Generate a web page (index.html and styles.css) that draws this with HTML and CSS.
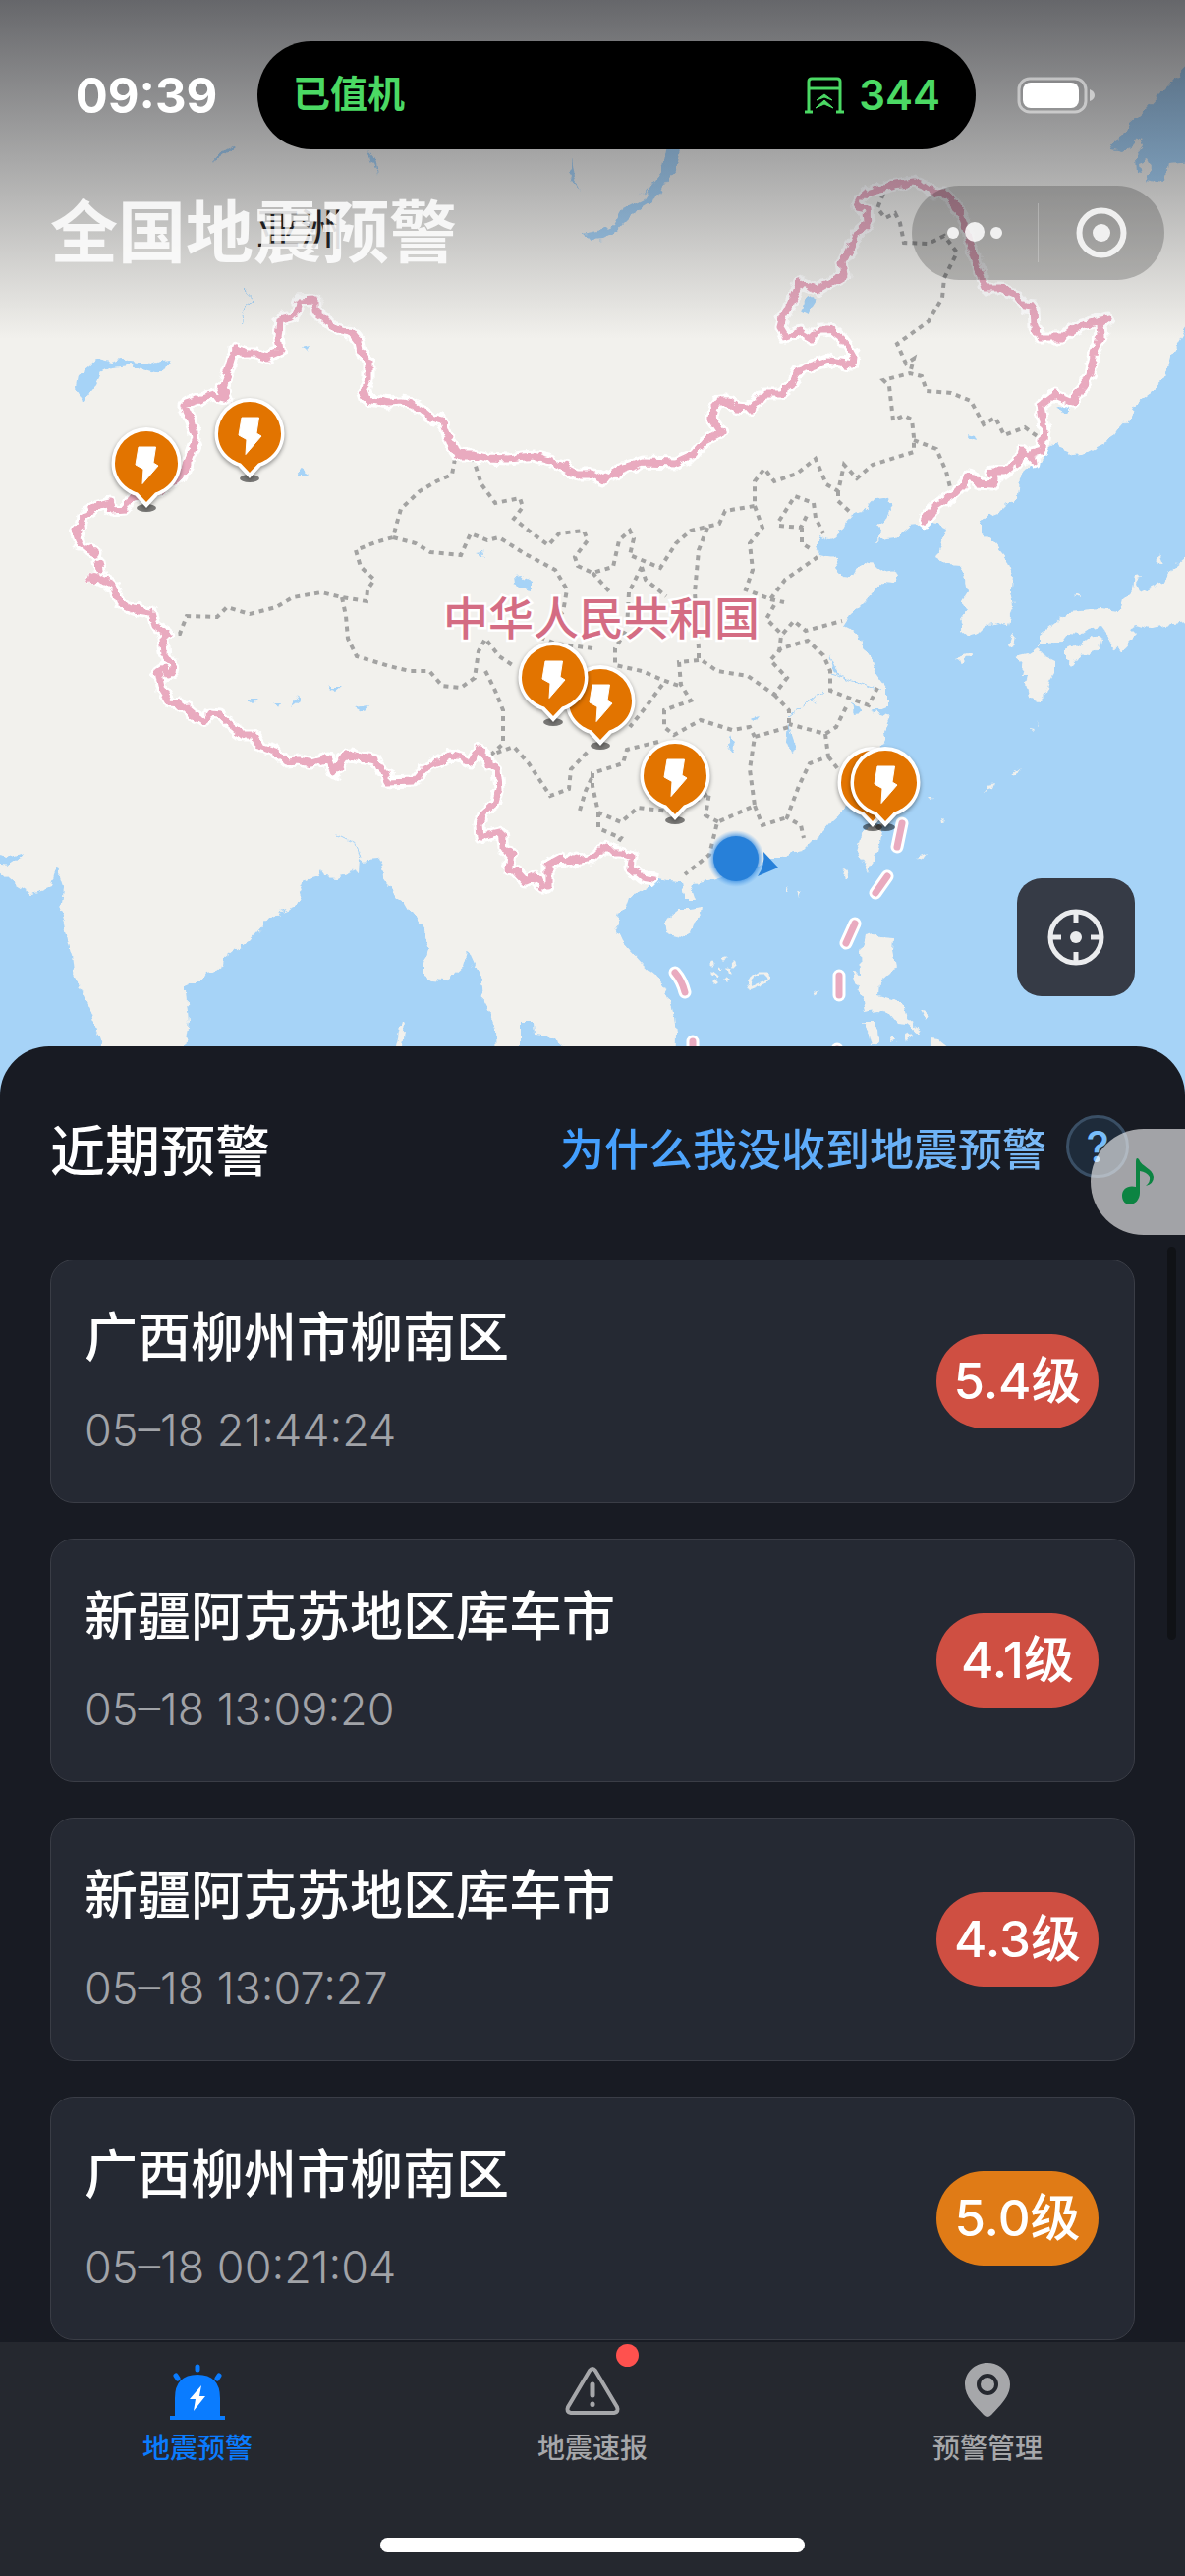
FILE: index.html
```html
<!DOCTYPE html>
<html lang="zh-CN">
<head>
    <meta charset="UTF-8">
    <meta name="viewport" content="width=device-width, initial-scale=1.0">
    <title>全国地震预警</title>
    <link rel="stylesheet" href="styles.css">
</head>
<body>
    <div class="app">
        <header class="top">
            <svg class="map" viewBox="0 0 1206 1120" preserveAspectRatio="xMidYMin slice" role="img" aria-label="地图">
                <defs>
                    <symbol id="pin" viewBox="0 0 90 110" width="90" height="110">
                        <ellipse cx="45" cy="90" rx="10" ry="4" fill="#000" opacity=".5"/>
                        <path class="pin-body" d="M45 8a35.500 36 0 0 1 35.500 36.500c0 17-12 29-24 33L45 90 33.500 77.500c-12-4-24-16-24-33A35.500 36 0 0 1 45 8z" fill="#fff"/>
                        <path d="M45 12a32 32.500 0 0 1 32 32.500c0 16-11 26-23 30L45 84l-9-9.500c-12-4-23-14-23-30A32 32.500 0 0 1 45 12z" fill="#e27400"/>
                        <path d="M37 28h17.500l-2.500 16 5 3-16 18.500 1-15-8-4.500z" fill="#fff" stroke="#fff" stroke-width="1" stroke-linejoin="round"/>
                    </symbol>
                    <radialGradient id="glow">
                        <stop offset=".7" stop-color="#2780d9"/>
                        <stop offset="1" stop-color="#5aa6f0" stop-opacity="0"/>
                    </radialGradient>
                    <!-- 海岸线、国界的细小曲折 -->
                    <filter id="rough" filterUnits="userSpaceOnUse" x="0" y="0" width="1206" height="1120">
                        <feTurbulence type="fractalNoise" baseFrequency=".11" numOctaves="2" seed="4"/>
                        <feDisplacementMap in="SourceGraphic" scale="9" xChannelSelector="R" yChannelSelector="G"/>
                    </filter>
                    <!-- 国界 -->
                    <path id="border" d="M941 531L945 523 953 515 972 502 980 494 984 485 990 486 995 492 1011 493 1013 487 1009 480 1022 480 1036 470 1040 458 1052 471 1050 461 1061 458 1063 437 1059 413 1073 402 1092 410 1099 397 1105 389 1109 380 1114 357 1121 343 1120 330 1128 324 1113 328 1095 333 1082 343 1059 343 1053 333 1052 313 1043 312 1034 300 1018 293 1003 293 995 272 990 255 982 230 977 217 972 208 961 196 951 197 940 189 930 185 911 188 884 195 875 203 871 211 882 213 883 228 872 238 864 256 857 267 859 280 847 287 833 295 823 291 814 287 803 313 797 322 794 333 800 343 815 338 825 344 834 335 845 335 857 345 864 354 869 363 868 371 843 367 826 373 811 378 805 392 795 400 778 400 770 410 763 416 749 415 741 408 732 408 726 415 724 425 734 440 718 448 705 463 688 471 655 470 632 478 614 489 603 483 588 483 575 476 560 469 542 464 517 467 496 466 481 463 467 463 458 450 450 428 438 425 429 417 419 411 408 409 396 410 373 406 370 397 375 385 375 370 367 357 365 348 358 339 349 337 340 334 328 322 321 317V305L304 306 302 317 296 323 285 326 283 343 285 357 272 363 261 360 250 360 240 354 233 377 226 395 232 406 217 402 187 412 194 427 199 447 192 467 188 482 181 487 160 500 133 507 127 518 114 519 112 512 100 515 85 525 83 533 77 540 82 555M88 558l10 5M100 572l2 9M95 588L110 593 117 600 121 613 135 620 154 623 158 637 170 645 165 650 167 665 176 678 175 685 171 687 166 680 161 684 165 702 173 715 183 716 196 727 208 735 213 726 223 727 235 738 248 748 258 748 265 760 280 765 292 775 304 774 317 777 335 772 340 787 348 773 356 768 383 774 386 781 392 787 394 796 421 795 431 783 445 776 458 768 468 771 479 777 488 763 496 772 498 779 506 783 508 803 504 817 492 828 488 840 489 852 510 847 512 863 520 868 517 885 524 885 535 897 546 892 551 903 558 903 558 880 571 873 577 878 585 873 591 876 603 873 611 865 618 862 624 868 632 868 643 872 641 883 653 893 666 895"/>
                    <path id="dashes" d="M918 838l-5 24M903 892l-12 17M870 940l-9 20M854 993v20M687 990q7 8 10 20M705 1060v20M852 1068v20"/>
                </defs>
                <rect width="1206" height="1120" fill="#f2f1ed"/>

                <!-- 海洋 -->
                <g class="sea" filter="url(#rough)">
                    <path d="M1216 320L1198 350 1191 363 1187 378 1184 387 1170 400 1157 410 1150 424 1138 437 1132 446 1126 450 1107 460 1100 463 1091 464 1088 459 1080 456 1077 450 1070 454 1066 462 1058 470 1044 478 1038 487 1037 497 1036 505 1026 512 1018 520 1005 525 999 532 999 543 1008 548 1015 557 1024 568 1030 583 1029 600 1032 617 1028 626 1026 637 1015 634 1003 637 996 644 984 647 979 643 980 636 977 630 984 620 979 612 984 604 982 590 976 575 964 574 953 567 956 560 959 548 963 537 955 533 945 532 936 534 926 535 911 547 902 548 891 552 899 543 893 535 903 528 907 520 905 508 898 506 891 507 885 514 878 522 868 524 861 532 857 540 849 547 842 549 834 545 830 550 830 557 834 565 843 567 851 568 853 575 851 580 857 587 866 588 872 578 880 573 890 575 899 581 906 580 914 585 911 593 900 592 888 603 880 612 872 620 864 626 857 637 865 641 874 647 878 657 886 670 890 682 903 700 903 712 903 718 888 724 896 727 906 730 903 737 900 745 902 753 895 767 889 778 880 790 873 806 866 814 861 823 848 835 838 847 826 856 815 867 805 869 795 873 784 873 771 883 757 893 745 891 734 893 720 897 707 900 704 908 707 917 697 917 695 907 693 897 680 896 668 893 659 902 641 913 638 922 630 930 626 943 633 958 641 967 655 982 668 993 676 1004 682 1017 686 1035 688 1053 686 1130H1216z"/>
                    <path d="M184 1130L188 1065 192 1040 190 1020 189 1007 193 1000 204 1000 210 990 220 988 227 983 228 976 240 966 254 957 262 948 275 933 287 928 300 923 306 910 304 903 306 898 316 894 323 892 328 884 331 892 342 893 354 890 358 884 365 888 366 875 370 878 374 874 385 873 389 882 390 893 398 904 404 913 412 918 419 930 425 938 431 947 433 957 436 967 431 982 431 993 440 998 450 999 462 991 471 983 475 970 478 972 483 983 488 990 491 1004 492 1020 499 1033 504 1047 506 1130z"/>
                    <path d="M-10 878L15 900 31 910 42 907 52 903 55 890 58 883 62 884 61 893 65 905 62 927 66 940 69 957 73 972 75 990 84 1010 92 1027 98 1048 104 1065V1130H-10z"/>
                    <path d="M-8 868l20 4 12-4-5 7-9 6-18-2zM529 1040h15l1 13 15 2 12 9 3 20h-46z"/>
                    <path d="M1216 60L1194 83 1180 97 1166 112 1149 127 1142 138 1130 147 1132 153 1141 155 1152 148 1160 139 1163 150 1156 160 1157 177 1163 178 1161 166 1168 163 1172 171 1166 183 1176 185 1186 186 1189 167 1216 165z"/>
                    <path d="M686 130L678 152 674 173 664 186 655 197 647 201 660 194 654 203 634 213 625 229 614 234 603 236 592 238 603 244 614 243 626 237 633 229 645 217 668 203 676 187 688 173 693 152 698 130z"/>
                    <path d="M85 408l-8-13 2-12 12-10 9-8 12 3 11-3 9 4 22 2 10-4 10-1-4 9-11 4-27-7-17 2-13 7-5 11z"/>
                    <path d="M240 149l-16 12-9 5 13-14 9-5zM375 153l7 8 3 17-4-10zM582 160l3 22 6 12-8-10-5-8 4-4z"/>
                    <path d="M820 304l6-2 5 3-5 8-4 8-6-3zM522 587l8-1 12 6 0 9-9-2-10-4zM1075 416l8-4 6 4-5 5zM308 353l8-2-3 7zM303 484l5-6 6 4-2 2zM334 699l13 0-5 4zM362 720l12-2-5 6zM254 712l8 0-4 3zM278 716l9 0-2 4zM296 719l6-12 2 6zM484 563l6-1 2 4z"/>
                    <path d="M744 746l5 12-4 8-5-7zM802 738l6 18 3 6-7 4-4-10zM867 717l8 3 3 6-9 1zM844 666l6 12 6 12-8-8zM824 713l6-2-2 4zM762 731l12-3-4 5zM984 442l8 2 2 5-6-2z"/>
                    <path class="river" d="M247 294l12 11-10 8-3 10 3 4M845 686l26 8 26 9M343 850l20 10 4 14M803 730l20-15 16-12"/>
                </g>

                <!-- 岛屿 -->
                <g class="land" filter="url(#rough)">
                    <path d="M1216 560L1191 580 1184 592 1168 600 1160 604 1157 592 1162 584 1156 585 1154 598 1145 607 1141 622 1120 620 1088 623 1074 634 1057 647 1057 656 1066 655 1080 653 1086 645 1099 646 1108 640 1120 637 1128 648 1134 660 1140 664 1148 655 1157 646 1150 639 1157 636 1170 640 1186 636 1216 632z"/>
                    <path d="M1084 660l10-5 5 2 12-10 9 3-2 10-9 6-7-1-11 13-7-8z"/>
                    <path d="M1034 668l12-3 11-7 5 9 12 6 0 12-5 8-4 12-8 8-10-5-3-12 2-10-6 0 2-8z"/>
                    <path d="M676 940l6-8 9-7 10 0 15-2-1 8-9 10-3 8-10 6-8-2-7-3z"/>
                    <path d="M878 847l8-8h13l-2 12-4 16-5 9-4 11-4-8-8-12z"/>
                    <path d="M880 951l8-2 9 5 12 1-1 12 3 15-6 10-10 8-1 13 14 4 13 8 4 14 12 9-2 4-12-10-10-1-8-10-12-2-13 2-2-13-7-14-4-14 10 1-1-22z"/>
                    <path d="M878 1040l10 0 7 8 1 14-8 2-3-12zM945 1057l10 1 12 10-18 4zM408 1040l4 1-3 24h-6zM921 1054l8-2-6 9zM905 1055l8 4-6 3zM936 1028l8 4-2 8z"/>
                    <path d="M973 670l12-4 4 2-10 6zM1027 656l4-12 1 0-3 14zM1046 741l5 1-2 2zM1056 739l2-6-2 8zM1027 790l11-9-6 8zM1003 806l8-10-2 8zM861 884l3 2-2 8-3-3zM933 873l10-4-5 6zM800 902l3 6-3-2zM812 907l4 3-2 5zM830 1008l4 2-2 3zM958 832l4 4-3 1zM944 813l5 0-3 2zM1180 564l3 8-5 4zM1095 606l3-2 1 4z"/>
                    <path class="reef" d="M725 990l4 3M732 984l2 2M736 978l3-1M742 986l1 4M724 982l2-2M746 980l1 3M738 996l2 1M729 998l-2 1M762 1002l4-7 6-4 9 0 1 4-6 6-7 3-5 2z"/>
                </g>

                <!-- 省界 -->
                <g class="province">
                    <path d="M463 467L460 483 444 490 427 500 408 518 404 532 400 547 382 552 362 560 367 577 381 590 374 600 373 612 348 608 327 603 298 608 281 618 254 625 231 618 221 628 190 627 183 645 171 646"/>
                    <path d="M348 608L352 627 354 650 363 668 396 678 417 683 437 683 450 698 469 700 483 690 487 663 494 650 508 668 523 678"/>
                    <path d="M400 547L423 553 438 562 469 565 479 543 496 550 508 547 533 563 565 580 577 600 573 623 546 647 565 655 603 660"/>
                    <path d="M481 465L490 493 504 512 529 507 532 516 523 528 538 540 558 555 569 543 594 540 598 550 585 567 588 576 603 583 624 577 630 550 641 540 645 548 641 565 672 578 688 553 703 540 732 533 738 520 768 515 768 490 778 477 788 490 811 482 830 467 841 493 853 500 859 473 872 487 888 473 930 460 930 445 928 427 920 423 909 428 905 393 899 387 926 380 938 383 943 398 968 400 988 408 1001 432 1013 425 1022 443 1043 435 1061 448"/>
                    <path d="M899 197L893 212 901 222 911 217 916 227 920 247 945 248 961 240 974 257 961 283 959 303 945 327 913 350 922 370 930 365 926 380"/>
                    <path d="M930 448L953 457 963 480 968 500M853 500v10l13 12M793 530L809 505 828 512 830 527 838 543M793 535L815 537 822 523M816 537v16l8 5"/>
                    <path d="M768 515L776 537 763 553 766 580 759 600 784 610 799 590 832 567M784 610l14 3M788 616L780 630 797 647M793 664l2-17 13-15 12 10 37-10"/>
                    <path d="M720 537L711 560 707 603 711 660 711 670 730 683 761 688 788 707 801 690 784 672 795 660 822 652 838 667 845 683 845 703 884 718 893 700"/>
                    <path d="M788 707L803 723 803 740 768 750 763 783 768 820 730 837 722 870 697 890M768 820L776 840 801 832"/>
                    <path d="M711 672L691 674 693 697 703 713 676 723 676 740 686 748 713 733 745 743 763 740 768 750"/>
                    <path d="M640 603L638 640 626 660 626 677 653 683 674 692 691 698M674 697L657 720 641 740M653 577L640 603M653 577l4 13 21 17M603 583l17 19"/>
                    <path d="M670 755L638 763 634 777 603 787 603 800 609 827 632 837 649 822 688 827 722 807 718 830 732 837M609 827v16l23 10-6 9"/>
                    <path d="M861 720L851 740 840 747 803 737M840 747L843 770 824 777 813 800 801 832 815 840 818 853M843 770l10 13"/>
                    <path d="M494 683L504 703 512 723 512 757 500 768 523 760 538 777 560 810 579 803 581 783 600 763M590 825l6-20 7-15"/>
                </g>

                <g filter="url(#rough)">
                    <use href="#border" class="border-halo"/>
                    <use href="#border" class="border-line"/>
                    <circle cx="95" cy="588" r="6" fill="#e9aabf"/>
                </g>
                <use href="#dashes" class="border-halo"/>
                <use href="#dashes" class="border-line"/>

                <text class="asia" x="261" y="250">亚洲</text>
                <text class="country" x="451" y="646">中华人民共和国</text>

                <!-- 当前位置 -->
                <circle cx="749" cy="874" r="29" fill="url(#glow)"/>
                <circle cx="749" cy="874" r="23" fill="#2780d9"/>
                <path d="M777 867l15 16-21 9q8-11 6-25z" fill="#2780d9"/>

                <use href="#pin" x="104" y="427"/>
                <use href="#pin" x="209" y="397"/>
                <use href="#pin" x="566" y="669"/>
                <use href="#pin" x="518" y="645"/>
                <use href="#pin" x="642" y="745"/>
                <use href="#pin" x="843" y="752"/>
                <use href="#pin" x="856" y="752"/>
            </svg>

            <div class="overlay">
                <div class="status">
                    <span class="time">09:39</span>
                    <div class="island">
                        <span class="checkin">已值机</span>
                        <span class="gate">
                            <svg width="42" height="38" viewBox="0 0 42 38" fill="none" stroke="#4bd964" stroke-width="3">
                                <path d="M5 36V5q0-3 3-3h26q3 0 3 3v31M5 12h32M1 36h8M33 36h8"/>
                                <path d="M13 24l8-6 8 6-8-3zM12 32l9-8 9 8-9-4z" fill="#4bd964" stroke-width="1"/>
                            </svg>
                            344
                        </span>
                    </div>
                    <svg class="battery" width="80" height="38" viewBox="0 0 80 38">
                        <rect x="2" y="2" width="68" height="34" rx="11" fill="none" stroke="#fff" stroke-opacity=".5" stroke-width="3"/>
                        <rect x="6" y="6" width="57" height="26" rx="8" fill="#fff"/>
                        <path d="M74 13q5 2 5 6t-5 6z" fill="#fff" opacity=".55"/>
                    </svg>
                </div>
                <div class="titlebar">
                    <h1>全国地震预警</h1>
                    <div class="capsule">
                        <button type="button" aria-label="更多">
                            <svg width="60" height="60" viewBox="0 0 60 60" fill="#fff">
                                <circle cx="8" cy="30" r="6"/><circle cx="30" cy="29" r="10"/><circle cx="52" cy="30" r="6"/>
                            </svg>
                        </button>
                        <span class="line"></span>
                        <button type="button" aria-label="关闭">
                            <svg width="60" height="60" viewBox="0 0 60 60">
                                <circle cx="30" cy="30" r="22.500" fill="none" stroke="#fff" stroke-width="6"/><circle cx="30" cy="30" r="9" fill="#fff"/>
                            </svg>
                        </button>
                    </div>
                </div>
            </div>

            <button type="button" class="locate" aria-label="定位">
                <svg width="60" height="60" viewBox="0 0 60 60" fill="none" stroke="#ebecee" stroke-width="5">
                    <circle cx="30" cy="30" r="26"/>
                    <path d="M30 4v11M30 45v11M4 30h11M45 30h11"/>
                    <circle cx="30" cy="30" r="6" fill="#ebecee" stroke="none"/>
                </svg>
            </button>
        </header>

        <main class="sheet">
            <div class="sheet-head">
                <h2>近期预警</h2>
                <a href="#" class="why"><span class="why-text">为什么我没收到地震预警</span><span class="mark">?</span></a>
            </div>
            <ul class="list">
                <li class="card">
                    <div class="info">
                        <h3>广西柳州市柳南区</h3>
                        <time>05–18 21:44:24</time>
                    </div>
                    <span class="level">5.4级</span>
                </li>
                <li class="card">
                    <div class="info">
                        <h3>新疆阿克苏地区库车市</h3>
                        <time>05–18 13:09:20</time>
                    </div>
                    <span class="level">4.1级</span>
                </li>
                <li class="card">
                    <div class="info">
                        <h3>新疆阿克苏地区库车市</h3>
                        <time>05–18 13:07:27</time>
                    </div>
                    <span class="level">4.3级</span>
                </li>
                <li class="card">
                    <div class="info">
                        <h3>广西柳州市柳南区</h3>
                        <time>05–18 00:21:04</time>
                    </div>
                    <span class="level level_orange">5.0级</span>
                </li>
            </ul>
            <button type="button" class="music" aria-label="音乐">
                <svg width="36" height="52" viewBox="0 0 36 52" fill="#0c8442">
                    <path d="M16 6q0-6 3-3c3 8 14 9 15 18q0 7-8 9 5-4 4-9-3-5-10-6v22c0 7-5 12-10 12-5 0-8-4-8-9 0-7 6-11 14-9z"/>
                </svg>
            </button>
            <span class="scrollbar"></span>
        </main>

        <nav class="tabs">
            <a href="#" class="tab active">
                <svg width="60" height="60" viewBox="0 0 60 60">
                    <path d="M2 56h5V38q0-24 23-24t23 24v18h5v4H2z" fill="#0a7cff"/>
                    <path d="M30 6v3M8 15l2 3M52 15l-2 3" stroke="#0a7cff" stroke-width="5" stroke-linecap="round"/>
                    <path d="M34 25L22 39h6l-2 12 12-15h-6z" fill="#fff"/>
                </svg>
                地震预警
            </a>
            <a href="#" class="tab">
                <svg width="60" height="60" viewBox="0 0 60 60" fill="none" stroke="#a6a7aa" stroke-width="4" stroke-linejoin="round" stroke-linecap="round">
                    <path d="M27 10q3-4 6 0l22 37q2 5-3 6H8q-5-1-3-6z"/>
                    <path d="M30 24v11" stroke-width="5"/><path d="M30 44v.5" stroke-width="5"/>
                </svg>
                <i class="dot"></i>
                地震速报
            </a>
            <a href="#" class="tab">
                <svg width="60" height="60" viewBox="0 0 60 60">
                    <path d="M30 2c13 0 23 10 23 22 0 13-11 22-19 31q-4 4-8 0C18 46 7 37 7 24 7 12 17 2 30 2z" fill="#a6a7aa"/>
                    <circle cx="30" cy="24" r="9" fill="none" stroke="#25282f" stroke-width="4"/>
                </svg>
                预警管理
            </a>
            <span class="home"></span>
        </nav>
    </div>
</body>
</html>
```
FILE: styles.css
```css
* {
    box-sizing: border-box;
}
html, body {
    height: 100%;
    margin: 0;
}
body {
    background-color: #181b23;
    color: #fff;
    font-family: Inter, "Noto Sans CJK SC", sans-serif;
}
h1, h2, h3, ul {
    margin: 0;
    padding: 0;
}
button {
    border: 0;
    padding: 0;
    background: none;
}
a {
    text-decoration: none;
}
svg {
    display: block;
}
.app {
    display: flex;
    flex-direction: column;
    height: 100vh;
    overflow: hidden;
}

/* 地图 */
.top {
    position: relative;
    flex: none;
    height: 1120px;
}
.map {
    width: 100%;
    height: 100%;
}
.sea {
    fill: #a6d3f7;
}
.land {
    fill: #f2f1ed;
}
.reef {
    fill: none;
    stroke: #f2f1ed;
    stroke-width: 3;
    stroke-linecap: round;
}
.river {
    fill: none;
    stroke: #a6d3f7;
    stroke-width: 1;
}
.province {
    fill: none;
    stroke: #a3a3a2;
    stroke-width: 4;
    stroke-dasharray: 5 5;
}
.border-halo, .border-line {
    fill: none;
    stroke-linecap: round;
    stroke-linejoin: round;
}
.border-halo {
    stroke: #fff;
    stroke-width: 13;
}
.border-line {
    stroke: #e9aabf;
    stroke-width: 7;
}
.asia {
    fill: #222;
    font-size: 44px;
}
.country {
    fill: #d46c83;
    stroke: #fff;
    stroke-width: 5;
    paint-order: stroke;
    font-size: 46px;
    font-weight: 500;
}
.pin-body {
    filter: drop-shadow(0 2px 2px rgba(0, 0, 0, .4));
}
.overlay {
    position: absolute;
    top: 0;
    left: 0;
    right: 0;
    height: 345px;
    padding-top: 42px;
    background: linear-gradient(rgba(20, 22, 30, .63), rgba(20, 22, 30, 0));
}
.status {
    display: grid;
    grid-template-columns: 262px 1fr 213px;
    align-items: center;
    height: 110px;
}
.time {
    padding-left: 36px;
    text-align: center;
    font-size: 49px;
    font-weight: 700;
}
.island {
    display: flex;
    align-items: center;
    justify-content: space-between;
    height: 110px;
    padding: 0 36px;
    border-radius: 55px;
    background-color: #000;
    color: #4bd964;
    font-size: 38px;
    line-height: 54px;
    font-weight: 600;
}
.checkin {
    padding-bottom: 4px;
}
.gate {
    display: flex;
    align-items: center;
    gap: 14px;
    font-size: 42px;
}
.battery {
    margin-left: 42px;
}
.titlebar {
    display: flex;
    align-items: center;
    justify-content: space-between;
    margin-top: 35px;
    padding: 0 21px 0 51px;
}
.titlebar h1 {
    color: rgba(255, 255, 255, .85);
    font-size: 69px;
    line-height: 100px;
    font-weight: 700;
}
.capsule {
    display: flex;
    align-items: center;
    height: 96px;
    border-radius: 48px;
    background-color: rgba(0, 0, 0, .2);
}
.capsule button {
    display: flex;
    justify-content: center;
    width: 128px;
    opacity: .85;
}
.line {
    width: 1px;
    height: 60px;
    background-color: rgba(255, 255, 255, .25);
}
.locate {
    position: absolute;
    right: 51px;
    bottom: 106px;
    display: flex;
    align-items: center;
    justify-content: center;
    width: 120px;
    height: 120px;
    border-radius: 25px;
    background-color: #363b46;
}

/* 预警列表 */
.sheet {
    position: relative;
    flex: 1;
    min-height: 0;
    margin-top: -55px;
    padding: 0 51px;
    border-radius: 50px 50px 0 0;
    background-color: #181b23;
}
.sheet-head {
    display: flex;
    align-items: center;
    justify-content: space-between;
    height: 217px;
    padding-right: 6px;
    padding-bottom: 13px;
}
.sheet-head h2 {
    font-size: 56px;
    font-weight: 500;
}
.why {
    display: flex;
    align-items: center;
    gap: 20px;
    font-size: 45px;
    font-weight: 500;
}
.why-text {
    background: linear-gradient(90deg, #409eff, #7cbaf5);
    background-clip: text;
    -webkit-background-clip: text;
    color: transparent;
}
.mark {
    width: 64px;
    height: 64px;
    border: 3px solid #3a4f65;
    border-radius: 50%;
    background-color: #1e2b3a;
    color: #78bdf9;
    font-size: 44px;
    line-height: 58px;
    text-align: center;
}
.list {
    display: flex;
    flex-direction: column;
    gap: 36px;
    list-style: none;
}
.card {
    display: flex;
    align-items: center;
    justify-content: space-between;
    height: 248px;
    padding: 0 36px 0 34px;
    border: 1px solid #3a3d46;
    border-radius: 24px;
    background-color: #252933;
}
.info {
    display: flex;
    flex-direction: column;
    gap: 14px;
    padding-top: 5px;
}
.card h3 {
    font-size: 54px;
    line-height: 80px;
    font-weight: 500;
}
.card time {
    color: #a1a3a8;
    font-size: 45px;
    line-height: 80px;
    font-weight: 300;
}
.level {
    width: 165px;
    border-radius: 48px;
    background-color: #cf4f42;
    font-size: 51px;
    line-height: 96px;
    font-weight: 500;
    text-align: center;
}
.level_orange {
    background-color: #e07b16;
}
.music {
    position: absolute;
    top: 84px;
    right: 0;
    display: flex;
    align-items: center;
    width: 96px;
    height: 108px;
    padding-left: 30px;
    border-radius: 54px 0 0 54px;
    background-color: rgba(255, 255, 255, .6);
}
.scrollbar {
    position: absolute;
    top: 204px;
    right: 9px;
    width: 9px;
    height: 400px;
    border-radius: 5px;
    background-color: #101216;
}

/* 底部导航 */
.tabs {
    position: relative;
    display: grid;
    grid-template-columns: repeat(3, 1fr);
    flex: none;
    height: 238px;
    padding-top: 19px;
    background-color: #25282f;
}
.tab {
    position: relative;
    display: flex;
    flex-direction: column;
    align-items: center;
    gap: 8px;
    color: #a6a7aa;
    font-size: 28px;
    line-height: 42px;
    font-weight: 500;
}
.tab.active {
    color: #0a7cff;
}
.dot {
    position: absolute;
    top: -17px;
    left: 50%;
    width: 23px;
    height: 23px;
    margin-left: 24px;
    border-radius: 50%;
    background-color: #ff514e;
}
.home {
    position: absolute;
    bottom: 24px;
    left: 50%;
    width: 432px;
    height: 15px;
    border-radius: 8px;
    background-color: #fff;
    transform: translateX(-50%);
}
```
